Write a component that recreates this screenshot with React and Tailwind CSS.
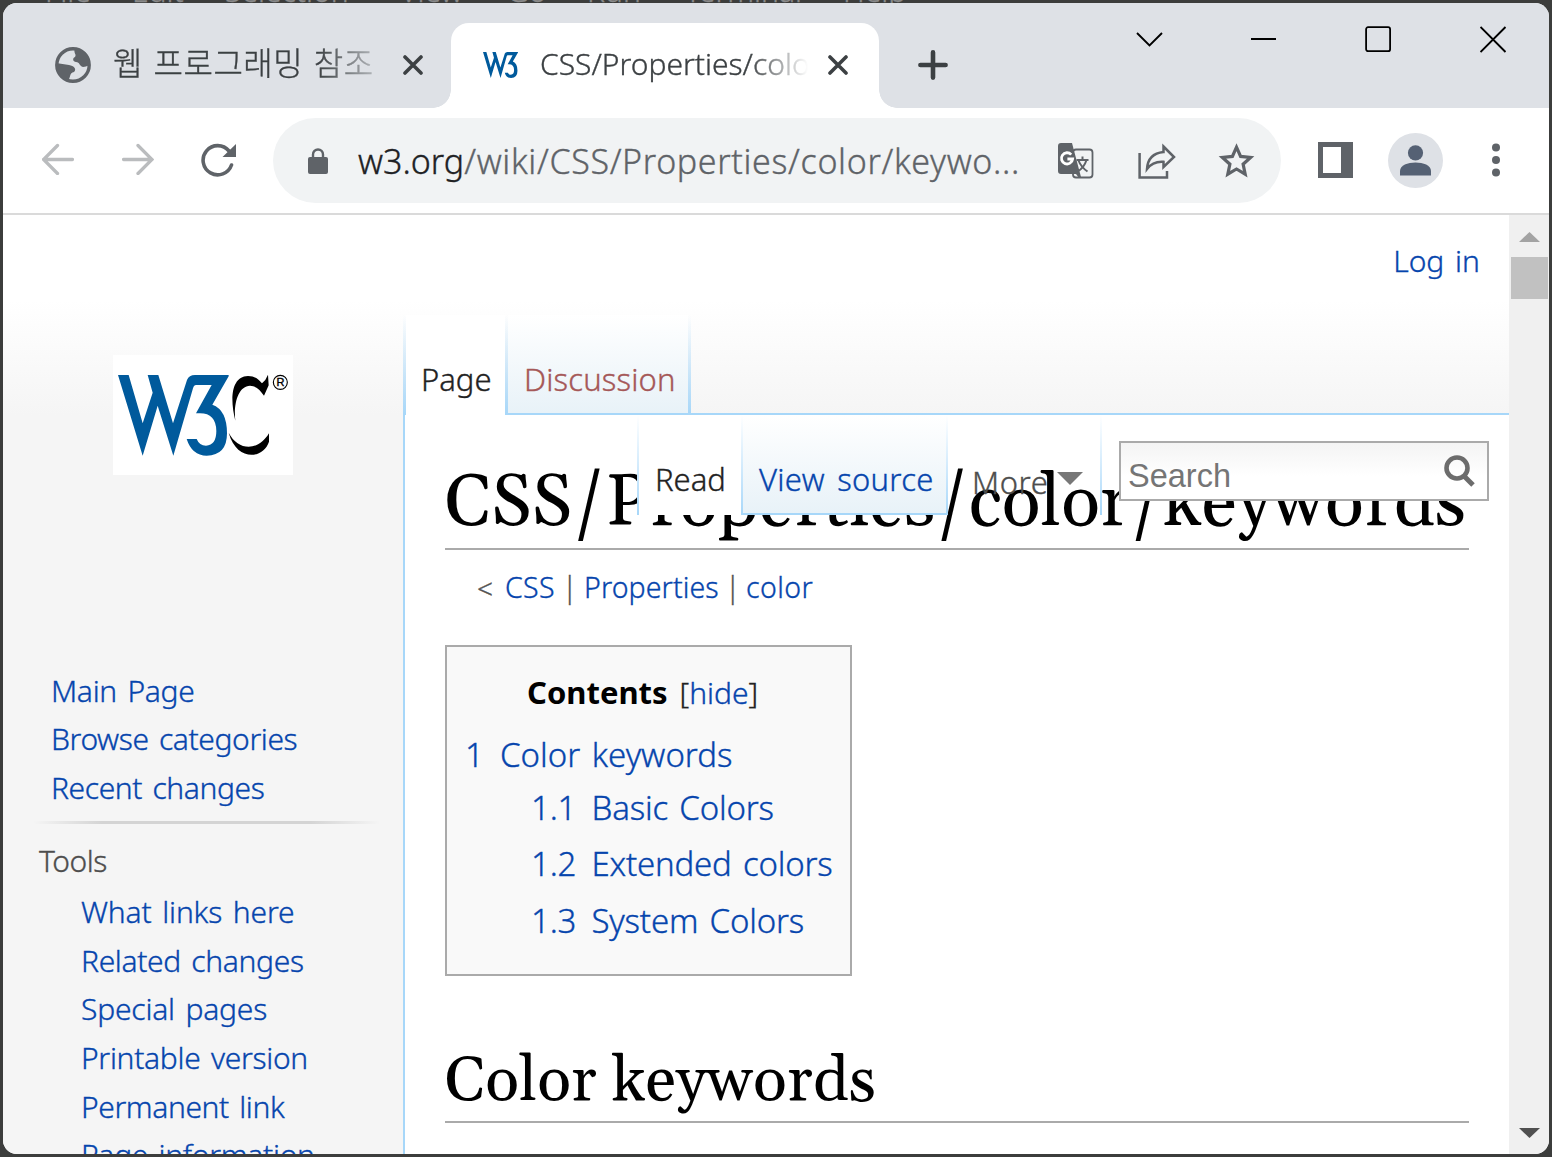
import React from "react";

const LINK = "text-[#0645ad]";

function W3Path() {
  return (
    <path
      fill="#005a9c"
      d="M84 135H116L158 280L188 188L173 135H205L249 280L291 150Q297 135 315 135H416V139L367 224Q411 240 411 310Q411 376 350 377Q306 377 290 327H320Q328 347 348 347Q379 345 379 303Q378 250 330 250H318L365 165H318Q312 165 309 175L250 377L203 227L158 377Z"
    />
  );
}

function Cross({ className }) {
  return (
    <svg viewBox="0 0 20 20" className={className} fill="none" stroke="#3c4043" strokeWidth="3.6" strokeLinecap="round">
      <path d="M2 2L18 18M18 2L2 18" />
    </svg>
  );
}

function TabStrip() {
  return (
    <div className="flex h-[105px] shrink-0 bg-[#dee1e6]">
      <div className="flex w-[448px] items-center rounded-br-[18px] pl-[52px] pt-[18px]">
        <svg viewBox="0 0 36 36" className="h-9 w-9 shrink-0">
          <circle cx="18" cy="18" r="16.2" fill="none" stroke="#5f6368" strokeWidth="3.4" />
          <path fill="#5f6368" d="M20 2C18 6 22 7 20 10C17 11 18 15 21 15C25 15 24 19 28 20C31 20 32 18 35 19C36 9 29 1 20 2Z" />
          <path fill="#5f6368" d="M1 16L14 18C19 19 22 22 19 25C14 26 16 30 13 34C5 32 0 25 1 16Z" />
        </svg>
        <div className="ml-[22px] h-11 w-[262px] overflow-hidden whitespace-nowrap font-['Noto_Sans_CJK_KR',sans-serif] text-[32px] font-light leading-[37px] tracking-[0.5px] text-[#3c4043] [mask-image:linear-gradient(to_right,#000_78%,#0004_100%)] [word-spacing:3px]">
          웹 프로그래밍 참조
        </div>
        <Cross className="ml-[28px] h-5 w-5 shrink-0" />
      </div>
      <div className="relative mt-5 flex w-[428px] items-center rounded-t-[18px] bg-white pb-[2px] pl-[32px]">
        <div className="absolute -left-[18px] bottom-0 h-[18px] w-[18px] bg-[radial-gradient(circle_at_0_0,#dee1e6_17.5px,#fff_18px)]" />
        <div className="absolute -right-[18px] bottom-0 h-[18px] w-[18px] bg-[radial-gradient(circle_at_100%_0,#dee1e6_17.5px,#fff_18px)]" />
        <svg viewBox="84 135 332 242" preserveAspectRatio="none" className="h-[26px] w-[35px] shrink-0">
          <W3Path />
        </svg>
        <div className="ml-[22px] w-[268px] overflow-hidden whitespace-nowrap pb-[2px] text-[30px] leading-[40px] text-[#3c4043] [mask-image:linear-gradient(to_right,#000_78%,transparent_100%)]">
          CSS/Properties/color/keywords
        </div>
        <Cross className="ml-[20px] h-5 w-5 shrink-0" />
      </div>
      <svg viewBox="0 0 30 30" className="ml-[39px] mt-[47px] h-[30px] w-[30px] shrink-0" stroke="#3c4043" strokeWidth="4.6" strokeLinecap="round">
        <path d="M15 2.4V27.6M2.4 15H27.6" />
      </svg>
      <div className="ml-auto mr-[42px] mt-[23px] flex h-[27px] items-center gap-[87.7px]">
        <svg viewBox="0 0 27 27" className="h-[27px] w-[27px]" fill="none" stroke="#000" strokeWidth="1.9">
          <path d="M1 7L13.5 19.5L26 7" />
        </svg>
        <svg viewBox="0 0 27 27" className="h-[27px] w-[27px]" stroke="#000" strokeWidth="2">
          <path d="M0 13H25" />
        </svg>
        <svg viewBox="0 0 27 27" className="h-[27px] w-[27px]" fill="none" stroke="#000" strokeWidth="1.8">
          <rect x="1.1" y="1.2" width="24" height="24" rx="2" />
        </svg>
        <svg viewBox="0 0 27 27" className="h-[27px] w-[27px]" stroke="#000" strokeWidth="1.9">
          <path d="M0.5 1L25.5 26M25.5 1L0.5 26" />
        </svg>
      </div>
    </div>
  );
}

function Toolbar() {
  return (
    <div className="flex h-[107px] shrink-0 items-start border-b-2 border-[#dadada] bg-white">
      <svg viewBox="0 0 32 32" className="ml-[39px] mt-[35px] h-8 w-8" fill="none" stroke="#babcbe" strokeWidth="3.3" strokeLinecap="round">
        <path d="M30.5 16.5H1.5M15.5 2.5L1.5 16.5L15.5 30.5" />
      </svg>
      <svg viewBox="0 0 32 32" className="ml-[48px] mt-[35px] h-8 w-8" fill="none" stroke="#babcbe" strokeWidth="3.3" strokeLinecap="round">
        <path d="M1.5 16.5H30M16 2.5L30 16.5L16 30.5" />
      </svg>
      <svg viewBox="0 0 36 34" className="ml-[47px] mt-[35px] h-[34px] w-9">
        <path d="M30.5 22A14.6 14.6 0 1 1 28 8" fill="none" stroke="#5f6368" strokeWidth="3.6" strokeLinecap="round" />
        <path d="M35 1V14H21.5Z" fill="#5f6368" />
      </svg>
      <div className="ml-[36px] mt-[10px] flex h-[85px] w-[1008px] items-center rounded-full bg-[#f1f3f4] pl-[35px]">
        <svg viewBox="0 0 20 27" className="mt-[2px] h-[27px] w-5">
          <rect x="0" y="9" width="20" height="17" rx="2" fill="#5f6368" />
          <path d="M5 10V6.5A5 5 0 0 1 15 6.5V10" fill="none" stroke="#5f6368" strokeWidth="2.4" />
        </svg>
        <div className="ml-[30px] w-[670px] whitespace-nowrap text-[34px] leading-[46px] text-[#5f6368]">
          <span className="text-[#202124]">w3.org</span>
          <span className="tracking-[0.65px]">/wiki/CSS/Properties/color/keywo...</span>
        </div>
        <svg viewBox="0 0 36 36" className="ml-[30px] h-9 w-9">
          <rect x="15" y="6.5" width="19.5" height="28" rx="3" fill="none" stroke="#5f6368" strokeWidth="1.8" />
          <path d="M3 0H14L23 34L21 35L18 31H3Q0 31 0 28V3Q0 0 3 0Z" fill="#5f6368" />
          <path d="M13.2 11.6A5.6 5.6 0 1 0 14.6 16H9.4" fill="none" stroke="#fff" strokeWidth="2.8" />
          <path d="M18.5 17H30.5M24.5 13.5V17M28.5 17Q26 25 19.5 28.5M20.5 17.5Q23 24 29.5 28.5" fill="none" stroke="#5f6368" strokeWidth="2" />
        </svg>
        <svg viewBox="0 0 38 36" className="ml-[44px] h-9 w-[38px]" fill="none" stroke="#5f6368" strokeWidth="2.5">
          <path d="M1.6 10V34.5H29V28" />
          <path d="M25.5 3.5L36 14L25.5 24V18.8Q15 18 9 26Q10 10.5 25.5 9Z" />
        </svg>
        <svg viewBox="0 0 37 36" className="ml-[42px] h-9 w-[37px]" fill="none" stroke="#5f6368" strokeWidth="3.2">
          <path d="M18.5 4.2L22.6 13.4L32.6 14.5L25.1 21.2L27.2 31.2L18.5 26L9.8 31.2L11.9 21.2L4.4 14.5L14.4 13.4Z" />
        </svg>
      </div>
      <svg viewBox="0 0 35 36" className="ml-[37px] mt-[34px] h-9 w-[35px]">
        <path fillRule="evenodd" fill="#5f6368" d="M0 0H35V36H0ZM5 5V31H23V5Z" />
      </svg>
      <svg viewBox="0 0 55 55" className="ml-[35px] mt-[25px] h-[55px] w-[55px]">
        <circle cx="27.5" cy="27.5" r="27.5" fill="#dee1e6" />
        <circle cx="27.5" cy="19.8" r="7.6" fill="#556174" />
        <path d="M12 42.5V38C12 26.8 43 26.8 43 38V42.5Z" fill="#556174" />
      </svg>
      <svg viewBox="0 0 8 34" className="ml-[48.5px] mt-[35px] h-[34px] w-2" fill="#5f6368">
        <circle cx="4" cy="4.5" r="4" />
        <circle cx="4" cy="17" r="4" />
        <circle cx="4" cy="29.5" r="4" />
      </svg>
    </div>
  );
}

function Logo() {
  return (
    <svg viewBox="69 75 540 360" className="ml-[110px] h-[120px] w-[180px] bg-white">
      <W3Path />
      <path d="M436 272C420 210 422 140 474 138C498 138 508 152 516 160Q528 150 534 134L536 166L522 197C510 180 500 168 480 167C445 168 430 220 436 272Z" />
      <path d="M416 308C445 364 505 364 537 310V335C520 388 440 395 416 308Z" />
      <circle cx="571" cy="157" r="21" fill="none" stroke="#000" strokeWidth="3.4" />
      <text x="571" y="169" textAnchor="middle" fontSize="33" fontFamily="Liberation Sans" stroke="#000" strokeWidth="1.2">R</text>
    </svg>
  );
}

function Sidebar() {
  return (
    <div className={"w-[400px] shrink-0 whitespace-nowrap pt-[140px] text-[30px] leading-[48.7px] tracking-[-0.15px] [word-spacing:3px] " + LINK}>
      <Logo />
      <div className="mt-[191.7px] pl-[48px]">
        <div className="tracking-[-0.3px]">Main Page</div>
        <div className="tracking-[-0.4px]">Browse categories</div>
        <div className="tracking-[-0.4px]">Recent changes</div>
      </div>
      <div className="ml-[30px] mt-[8.3px] h-[3px] w-[347px] bg-[linear-gradient(to_right,transparent,#d4d4d4_20%,#d4d4d4_80%,transparent)]" />
      <div className="mt-[13px] pl-9 tracking-[-0.5px] text-[#4d4d4d]">Tools</div>
      <div className="mt-[2px] pl-[78px]">
        <div>What links here</div>
        <div className="tracking-[-0.35px]">Related changes</div>
        <div className="tracking-[-0.2px]">Special pages</div>
        <div className="tracking-[-0.3px]">Printable version</div>
        <div className="tracking-[-0.4px]">Permanent link</div>
        <div className="tracking-[-0.3px]">Page information</div>
      </div>
    </div>
  );
}

function PageHeader() {
  return (
    <div className="flex h-[200px] flex-col">
      <div className={"flex h-[100px] justify-end pr-[29px] pt-[26px] text-[30px] leading-[40px] [word-spacing:3px] " + LINK}>Log in</div>
      <div className="flex h-[100px] text-[31px] leading-[40px]">
        <div className="w-[3px] bg-gradient-to-b from-transparent to-[#a7d7f9]" />
        <div className="w-[99px] bg-white pl-[15px] pt-[44px] text-[#222]">Page</div>
        <div className="w-[3px] bg-gradient-to-b from-transparent to-[#a7d7f9]" />
        <div className="w-[180px] border-b-2 border-[#a7d7f9] bg-gradient-to-b from-white to-[#e8f2f8] pl-[16px] pt-[44px] tracking-[0.15px] text-[#a55858]">Discussion</div>
        <div className="w-[3px] bg-gradient-to-b from-transparent to-[#a7d7f9]" />
        <div className="flex-1 border-b-2 border-[#a7d7f9]" />
      </div>
    </div>
  );
}

// The second tab row floats over the page title when the window is narrow.
function ViewTabs() {
  return (
    <div className="absolute right-0 top-0 flex h-[100px] text-[31px] leading-[40px]">
      <div className="w-[2px] bg-gradient-to-b from-white to-[#a7d7f9]" />
      <div className="w-[102px] bg-white pl-[16px] pt-[44px] text-[#222]">Read</div>
      <div className="w-[2px] bg-gradient-to-b from-white to-[#a7d7f9]" />
      <div className={"w-[203px] whitespace-nowrap border-b-2 border-[#a7d7f9] bg-gradient-to-b from-white to-[#e8f2f8] pl-[16px] pt-[44px] tracking-[0.3px] [word-spacing:4px] " + LINK}>View source</div>
      <div className="w-[2px] bg-gradient-to-b from-white to-[#a7d7f9]" />
      <div className="flex w-[152px] pl-[24px] pt-[47px] text-[#4d4d4d]">
        <span className="w-[85px] tracking-[0.6px]">More</span>
        <div className="mt-[10px] h-[13px] w-[26px] bg-[#777] [clip-path:polygon(0_0,100%_0,50%_100%)]" />
      </div>
      <div className="w-[2px] bg-gradient-to-b from-white to-[#a7d7f9]" />
      <div className="ml-[17px] mr-[20px] mt-[26px] flex h-[60px] w-[370px] items-center justify-between border-2 border-[#aaa] bg-gradient-to-b from-[#f4f4f4] to-white to-60% pl-[7px] pr-[12px]">
        <span className="pt-[9px] font-['Liberation_Sans',sans-serif] text-[32.5px] font-normal text-[#757575] [-webkit-text-stroke:0]">Search</span>
        <svg viewBox="0 0 31 32" className="h-8 w-[31px]" fill="none" stroke="#6c6c6c">
          <circle cx="13" cy="13" r="10.5" strokeWidth="4.6" />
          <path d="M19 20L29 30" strokeWidth="5" />
        </svg>
      </div>
    </div>
  );
}

function Contents() {
  return (
    <div className={"mt-[35px] h-[331px] w-[407px] whitespace-nowrap border-2 border-[#aaa] bg-[#f9f9f9] text-[33px] leading-[56.5px] [word-spacing:3px] " + LINK}>
      <div className="pl-[80px] pt-[17px] text-[30px] leading-[56px] text-[#222]">
        <b className="text-[31px] font-bold text-black [-webkit-text-stroke:0]">Contents</b>
        <span className="ml-[12px]">[<span className={LINK}>hide</span>]</span>
      </div>
      <div className="mt-[6px] flex">
        <span className="w-[53px] pl-[18px]">1</span>
        <span>Color keywords</span>
      </div>
      <div className="-mt-[3.6px]">
        {[["1.1", "Basic Colors"], ["1.2", "Extended colors"], ["1.3", "System Colors"]].map(([n, t]) => (
          <div key={n} className="flex tracking-[-0.2px]">
            <span className="w-[144.5px] pl-[84px]">{n}</span>
            <span>{t}</span>
          </div>
        ))}
      </div>
    </div>
  );
}

function Article() {
  return (
    <div className="relative flex-1 border-l-2 border-[#a7d7f9] bg-white px-[40px]">
      <h1 className="h-[135px] whitespace-nowrap border-b-2 border-[#aaa] pt-[44px] font-['Gelasio','Liberation_Serif',serif] text-[72px] font-normal leading-[90px] text-black [-webkit-text-stroke:0]">
        CSS/Properties/color/keywords
      </h1>
      <div className={"mt-[20px] flex h-10 pl-[32px] text-[28.5px] leading-[35px] " + LINK}>
        <span className="w-[28px] text-[28px] leading-[36px] text-[#545454]">&lt;</span>
        <span className="w-[57px] tracking-[0.3px]">CSS</span>
        <span className="w-[22px] text-[#545454]">|</span>
        <span className="w-[141px] tracking-[0.1px]">Properties</span>
        <span className="w-[21px] text-[#545454]">|</span>
        <span className="tracking-[0.4px]">color</span>
      </div>
      <Contents />
      <h2 className="mt-[58px] h-[89px] border-b-2 border-[#aaa] pt-[3px] font-['Gelasio','Liberation_Serif',serif] text-[62.8px] font-normal leading-[90px] text-black [-webkit-text-stroke:0]">
        Color keywords
      </h2>
      <ViewTabs />
    </div>
  );
}

function Scrollbar() {
  return (
    <div className="flex w-[40px] shrink-0 flex-col items-center bg-[#f0f0f0] pl-px">
      <div className="mt-[17px] h-[10px] w-[21px] bg-[#a3a3a3] [clip-path:polygon(50%_0,100%_100%,0_100%)]" />
      <div className="mt-[15px] h-[42px] w-[37px] bg-[#c1c1c1]" />
      <div className="mb-[16px] mt-auto h-[10px] w-[21px] bg-[#505050] [clip-path:polygon(0_0,100%_0,50%_100%)]" />
    </div>
  );
}

export default function App() {
  return (
    <div className="h-[1157px] w-[1552px] overflow-hidden bg-[#3c3d3c] px-[3px] font-['Noto_Sans',sans-serif] font-light [-webkit-text-stroke:0.35px_currentColor]">
      <div className="flex h-[3px] items-end overflow-hidden text-[30px] leading-[25px] text-[#8a8a8a]">
        <span className="ml-[42px] w-[87px] shrink-0">File</span>
        <span className="w-[93px] shrink-0">Edit</span>
        <span className="w-[175px] shrink-0">Selection</span>
        <span className="w-[107px] shrink-0">View</span>
        <span className="w-[80px] shrink-0">Go</span>
        <span className="w-[98px] shrink-0">Run</span>
        <span className="w-[158px] shrink-0">Terminal</span>
        <span className="shrink-0">Help</span>
      </div>
      <div className="flex h-[1151px] flex-col overflow-hidden rounded-[14px] bg-white">
        <TabStrip />
        <Toolbar />
        <div className="flex min-h-0 flex-1">
          <div className="flex min-w-0 flex-1 bg-[linear-gradient(to_bottom,#fff_85px,#f5f5f5_200px)]">
            <Sidebar />
            <div className="flex min-w-0 flex-1 flex-col">
              <PageHeader />
              <Article />
            </div>
          </div>
          <Scrollbar />
        </div>
      </div>
    </div>
  );
}
